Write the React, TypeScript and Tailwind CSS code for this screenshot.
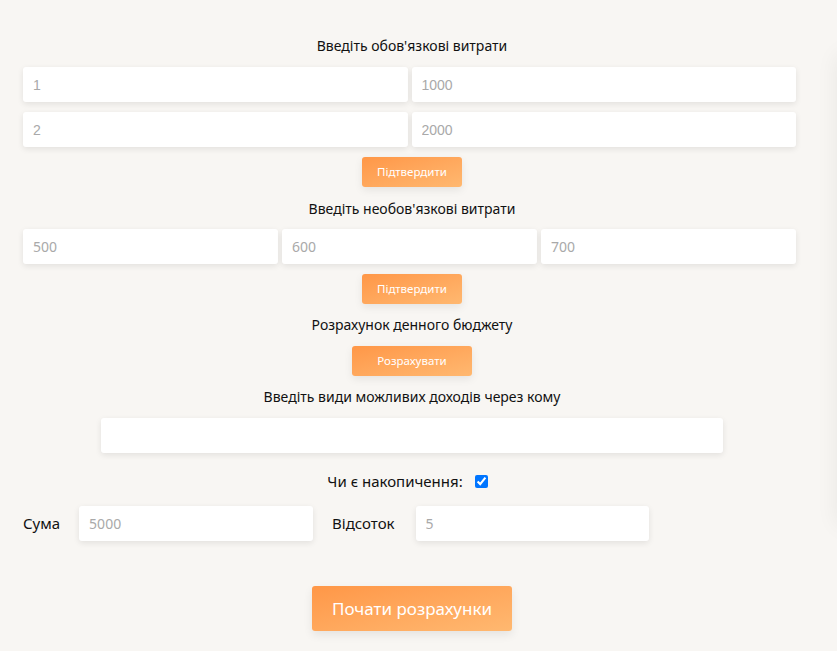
import React from "react";

const font = { fontFamily: '"Noto Sans", "Open Sans", sans-serif' };

function Field({ ph, className = "", arial = false }: { ph: string; className?: string; arial?: boolean }) {
  return (
    <input
      placeholder={ph}
      className={`h-[35px] rounded-[3px] bg-white px-[10px] text-[14px] text-[#333] placeholder:text-[#a9a9a9] outline-none shadow-[0_2px_6px_rgba(0,0,0,0.09)] ${arial ? "font-['Liberation_Sans',Arial,sans-serif]" : "font-['Noto_Sans',sans-serif] text-[13.5px]"} ${className}`}
    />
  );
}

function Btn({ children, w }: { children: React.ReactNode; w: string }) {
  return (
    <button
      className={`h-[30px] ${w} rounded-[3px] bg-gradient-to-br from-[#ff9747] to-[#ffb870] text-[11.5px] text-white shadow-[0_3px_8px_rgba(0,0,0,0.08)] font-['Noto_Sans',sans-serif]`}
    >
      {children}
    </button>
  );
}

export default function App() {
  return (
    <div className="relative h-[651px] w-[837px] overflow-hidden bg-[#f8f6f3] text-[#111]" style={font}>
      <div className="absolute left-[838px] top-[55px] h-[470px] w-[300px] shadow-[0_0_22px_rgba(0,0,0,0.07)]" />
      <div className="ml-[23px] flex w-[778px] flex-col items-center pt-[36px]">
        <div className="text-[14px] leading-[20px]">Введіть обов'язкові витрати</div>
        <div className="mt-[11px] grid w-[773px] self-start grid-cols-2 gap-x-[4px] gap-y-[10px]">
          <Field ph="1" arial />
          <Field ph="1000" arial />
          <Field ph="2" arial />
          <Field ph="2000" arial />
        </div>
        <div className="mt-[10px]">
          <Btn w="w-[100px]">Підтвердити</Btn>
        </div>
        <div className="mt-[12px] text-[14px] leading-[20px]">Введіть необов'язкові витрати</div>
        <div className="mt-[10px] grid w-[773px] self-start grid-cols-3 gap-x-[4px]">
          <Field ph="500" />
          <Field ph="600" />
          <Field ph="700" />
        </div>
        <div className="mt-[10px]">
          <Btn w="w-[100px]">Підтвердити</Btn>
        </div>
        <div className="mt-[11px] text-[14px] leading-[20px]">Розрахунок денного бюджету</div>
        <div className="mt-[11px]">
          <Btn w="w-[120px]">Розрахувати</Btn>
        </div>
        <div className="mt-[11px] text-[14px] leading-[20px]">Введіть види можливих доходів через кому</div>
        <div className="mt-[11px] w-full">
          <Field ph="" className="ml-[78px] w-[622px]" />
        </div>
        <div className="mt-[18px] mr-[9px] flex items-center text-[15px] leading-[20px]">
          <span className="mr-[12px]">Чи є накопичення:</span>
          <input type="checkbox" defaultChecked className="h-[13px] w-[13px] accent-[#0075ff]" />
        </div>
        <div className="mt-[15px] flex w-full items-center text-[15px]">
          <span className="mr-[19px]">Сума</span>
          <Field ph="5000" className="w-[234px]" />
          <span className="ml-[19px] mr-[21px]">Відсоток</span>
          <Field ph="5" className="w-[233px]" />
        </div>
        <button className="mt-[45px] h-[45px] w-[200px] rounded-[3px] bg-gradient-to-br from-[#ff9747] to-[#ffb870] text-[17px] text-white shadow-[0_4px_10px_rgba(0,0,0,0.08)]">
          Почати розрахунки
        </button>
      </div>
    </div>
  );
}
